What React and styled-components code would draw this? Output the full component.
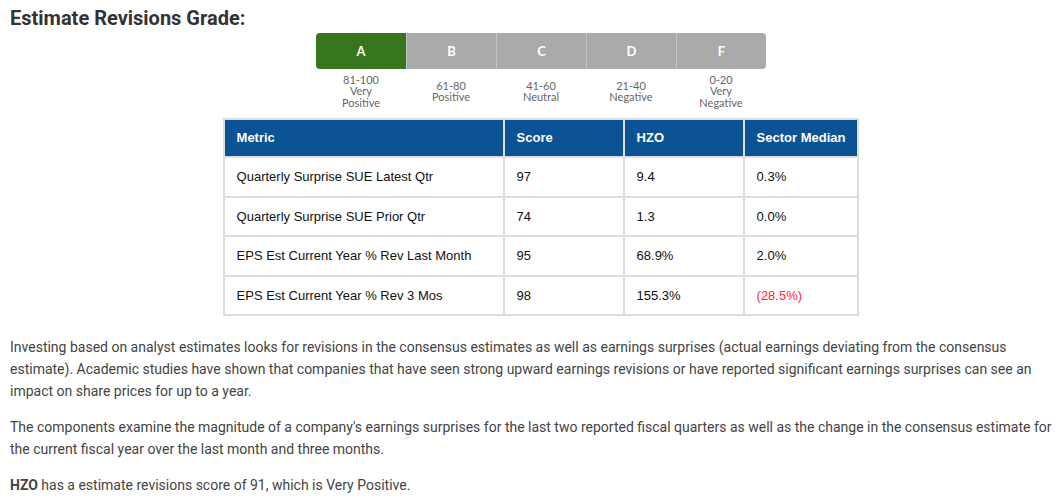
import React from "react";
import styled, { createGlobalStyle } from "styled-components";

const GlobalStyle = createGlobalStyle`
  body {
    margin: 0;
    padding: 0 10px;
    background: #fff;
    font-family: Roboto, "Liberation Sans", sans-serif;
    color: #444;
  }
`;

const Page = styled.div`
  width: 1048px;
  padding-top: 6px;
`;

const Title = styled.h2`
  margin: 0 0 3px;
  font-size: 20px;
  line-height: 24px;
  font-weight: 700;
  color: #333;
`;

const Center = styled.div`
  display: flex;
  flex-direction: column;
  align-items: center;
  padding-left: 14px;
`;

const GradeBar = styled.div`
  display: flex;
  border-radius: 4px;
  overflow: hidden;
`;

const Grade = styled.div`
  box-sizing: border-box;
  width: 90px;
  height: 36px;
  display: flex;
  align-items: center;
  justify-content: center;
  font-family: Lato, "Open Sans", sans-serif;
  font-weight: 700;
  font-size: 13px;
  color: #fff;
  background: ${(p) => (p.active ? "#38761d" : "#aaaaaa")};
  border-left: ${(p) => (p.first ? "none" : "1px solid #c4c4c4")};
`;

const Labels = styled.div`
  display: flex;
  align-items: center;
  height: 44px;
`;

const Label = styled.div`
  width: 90px;
  text-align: center;
  font-family: Lato, "Open Sans", sans-serif;
  font-size: 11px;
  line-height: 11.5px;
  color: #666;
`;

const Table = styled.table`
  border-collapse: collapse;
  font-family: "Liberation Sans", Arial, sans-serif;
  font-size: 13px;
  color: #111;
  margin-top: 5px;
`;

const Th = styled.th`
  background: #0b5394;
  color: #fff;
  font-weight: 700;
  text-align: left;
  white-space: nowrap;
  padding: 10px 12px 11px;
  border: 2px solid #ddd;
  width: ${(p) => p.w}px;
`;

const Td = styled.td`
  padding: 11px 12px 11.5px;
  border: 2px solid #ddd;
  color: ${(p) => (p.neg ? "#ff2a2a" : "#111")};
`;

const Para = styled.p`
  margin: 20px 0 14px;
  font-size: 14px;
  line-height: 22px;
  color: #444;
  & + & {
    margin-top: 0;
  }
`;

const grades = [
  { letter: "A", lines: ["81-100", "Very", "Positive"] },
  { letter: "B", lines: ["61-80", "Positive"] },
  { letter: "C", lines: ["41-60", "Neutral"] },
  { letter: "D", lines: ["21-40", "Negative"] },
  { letter: "F", lines: ["0-20", "Very", "Negative"] },
];

const rows = [
  ["Quarterly Surprise SUE Latest Qtr", "97", "9.4", "0.3%"],
  ["Quarterly Surprise SUE Prior Qtr", "74", "1.3", "0.0%"],
  ["EPS Est Current Year % Rev Last Month", "95", "68.9%", "2.0%"],
  ["EPS Est Current Year % Rev 3 Mos", "98", "155.3%", "(28.5%)"],
];

export default function App() {
  return (
    <Page>
      <GlobalStyle />
      <Title>Estimate Revisions Grade:</Title>
      <Center>
        <GradeBar>
          {grades.map((g, i) => (
            <Grade key={g.letter} active={i === 0} first={i === 0}>
              {g.letter}
            </Grade>
          ))}
        </GradeBar>
        <Labels>
          {grades.map((g) => (
            <Label key={g.letter}>
              {g.lines.map((l) => (
                <div key={l}>{l}</div>
              ))}
            </Label>
          ))}
        </Labels>
        <Table>
          <thead>
            <tr>
              <Th w={254}>Metric</Th>
              <Th w={94}>Score</Th>
              <Th w={94}>HZO</Th>
              <Th w={88}>Sector Median</Th>
            </tr>
          </thead>
          <tbody>
            {rows.map((r) => (
              <tr key={r[0]}>
                <Td>{r[0]}</Td>
                <Td>{r[1]}</Td>
                <Td>{r[2]}</Td>
                <Td neg={r[3].startsWith("(")}>{r[3]}</Td>
              </tr>
            ))}
          </tbody>
        </Table>
      </Center>
      <Para>
        Investing based on analyst estimates looks for revisions in the consensus estimates as well as
        earnings surprises (actual earnings deviating from the consensus estimate). Academic studies have
        shown that companies that have seen strong upward earnings revisions or have reported significant
        earnings surprises can see an impact on share prices for up to a year.
      </Para>
      <Para>
        The components examine the magnitude of a company's earnings surprises for the last two reported
        fiscal quarters as well as the change in the consensus estimate for the current fiscal year over the
        last month and three months.
      </Para>
      <Para>
        <b>HZO</b> has a estimate revisions score of 91, which is Very Positive.
      </Para>
    </Page>
  );
}
